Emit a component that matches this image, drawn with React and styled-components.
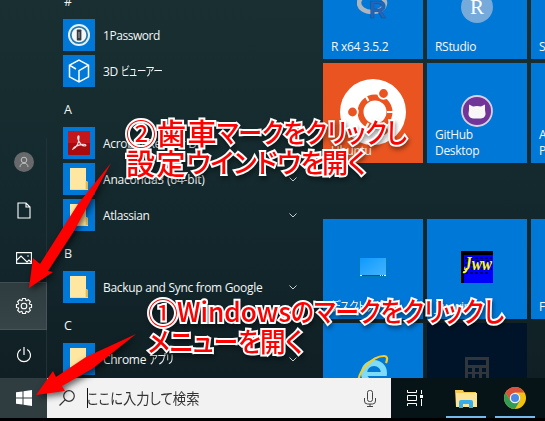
import React from "react";
import styled, { createGlobalStyle } from "styled-components";

const Global = createGlobalStyle`
  * { box-sizing: border-box; }
  body { margin: 0; overflow: hidden; background: #000; }
`;
const Screen = styled.div`
  position: relative; width: 545px; height: 421px; overflow: hidden; background: #000;
  font-family: "Open Sans", "Noto Sans CJK JP", sans-serif; color: #f4f7f7;
  display: flex; flex-direction: column;
`;
const Menu = styled.main`
  height: 378px; flex: none; display: grid; grid-template-columns: 47px 276px 222px; grid-template-rows: 378px; overflow: hidden;
  background: linear-gradient(180deg, #1a2f31 0%, #142a2e 45%, #12252a 75%, #101f23 100%);
`;
const Rail = styled.nav`
  display: flex; flex-direction: column; justify-content: flex-end;
`;
const RailButton = styled.button`
  height: 48px; flex: none; padding: 0 0 0 1px; border: 0; display: grid; place-items: center;
  color: #fff; background: ${p => p.$active ? "linear-gradient(#2f3c3f,#374448)" : "transparent"};
  box-shadow: ${p => p.$active ? "inset 0 1px #414d50, inset -1px -1px #485457" : "inset -1px 0 #213236"};
`;
const List = styled.section`margin-top: -19px; padding-left: 16px;`;
const Letter = styled.h2`margin: 0; height: 36px; padding-left: 1px; font: 400 12.5px/41px "Open Sans", sans-serif;`;
const Row = styled.div`height: 36px; display: flex; align-items: center; padding-right: 26px;`;
const IconBox = styled.span`width: 32px; height: 32px; flex: none; background: #0078d7; display: grid; place-items: center;`;
const RowName = styled.span`
  flex: 1; margin-left: 8px; padding-top: 2px; white-space: pre; font-size: 12px; line-height: 20px;
  letter-spacing: ${p => p.$ls ?? -0.3}px;
`;
const Kana = styled.span`
  display: inline-block; transform: scaleX(${p => p.$sx || 0.78}); transform-origin: left; font-feature-settings: "palt";
`;
const Tiles = styled.section`
  display: grid; grid-template-columns: repeat(3, 100px); grid-template-rows: 100px 100px 48px 100px 100px;
  column-gap: 4px; row-gap: 4px; margin-top: -41px; align-content: start;
`;
const Tile = styled.div`
  background: ${p => p.$bg || "#0078d7"}; grid-row: ${p => p.$row}; grid-column: ${p => p.$col};
  display: grid; place-items: center; position: relative; overflow: hidden; padding-bottom: ${p => p.$lift || 0}px;
`;
const TileName = styled.span`
  position: absolute; left: 8px; bottom: 4px; font-size: 12px; line-height: 16px; white-space: pre;
  letter-spacing: -0.3px;
`;
const Taskbar = styled.footer`height: 40px; flex: none; display: flex; background: #061417;`;
const Start = styled.button`width: 47px; border: 0; padding: 0; background: #303d40; display: grid; place-items: center;`;
const Search = styled.div`width: 344px; background: #f2f2f2; color: #333; display: flex; align-items: center; padding: 0 15px 0 12px;`;
const Caret = styled.i`width: 1px; height: 20px; background: #111; margin-left: 12px;`;
const Query = styled.span`
  flex: 1; margin-left: -1px; font: 400 15px/24px "Noto Sans CJK JP", sans-serif; font-feature-settings: "palt";
  transform: scaleX(0.89); transform-origin: left;
`;
const TaskButton = styled.div`
  width: ${p => p.$w}px; display: grid; place-items: center; position: relative; padding-right: ${p => p.$pr || 0}px;
  &::after { content: ""; position: absolute; bottom: 0; left: 5px; right: 4px; height: 2px; background: ${p => p.$open ? "#76b9ed" : "transparent"}; }
`;
const Overlay = styled.div`position: absolute; inset: 0; pointer-events: none;`;
const Arrows = styled.svg`position: absolute; inset: 0; filter: drop-shadow(2px 3px 3px rgba(0,0,0,.6));`;
const Callout = styled.p`
  position: absolute; left: ${p => p.$x}px; top: ${p => p.$y}px; margin: 0;
  font: 500 27px/30px "Noto Sans CJK JP", sans-serif; color: #f00; white-space: nowrap;
  -webkit-text-stroke: 4px #fff; paint-order: stroke fill; font-feature-settings: "palt";
  filter: drop-shadow(1px 3px 2px rgba(0,0,0,.4));
`;
const Line = styled.span`display: flex; height: 30px;`;
const Run = styled.span`
  width: ${p => p.$w}px; flex: none; font-size: ${p => p.$size || 27}px; font-weight: ${p => p.$wt || 500};
  letter-spacing: ${p => p.$ls || 0}px; transform: scaleX(${p => p.$sx || 1}); transform-origin: left;
`;

const S = ({ w, h = w, vb, children }) => (
  <svg width={w} height={h} viewBox={vb || `0 0 ${w} ${h}`} fill="none">{children}</svg>
);
const Chevron = () => <S w={8} h={5}><path d="M.5.5 4 4 7.5.5" stroke="#c8cecf" /></S>;
const Folder = () => (
  <S w={18} h={22}><path d="M0 0h16v13l2 1v8H0z" fill="#f5d886" /><path d="M0 0h16v13l-1 1v7H0z" fill="#ffe7a2" /><path d="M16 13v8h2v-7z" fill="#dcb85e" /></S>
);
const OnePassword = () => (
  <S w={24}><circle cx="12" cy="12" r="11" fill="#e9f0f3" /><circle cx="12" cy="12" r="8.2" fill="#f7f7f7" stroke="#247cad" strokeWidth="1.8" /><rect x="9.8" y="6.5" width="4.6" height="11" rx=".8" fill="#343b41" /><path d="M12 9v6" stroke="#aaa" /></S>
);
const Cube = () => <S w={24}><path d="M12 1.2 21.5 6.2v11.6L12 22.8 2.5 17.8V6.2zM2.5 6.2 9 10M21.5 6.2 12 11.7v11" stroke="#fff" strokeWidth="1.5" /></S>;
const Acrobat = () => (
  <S w={22} h={24}><rect width="22" height="24" rx="1" fill="#a80a0e" /><path d="M0 0h22v12H0z" fill="#c5171b" /><path d="M5 18c4-2 6-7 6-12 0-2-2-1-1 2 1 4 4 7 7 7 2-.4.6-2-2-1.700-4 .4-9 2.300-10 4.700z" stroke="#f4dcdc" strokeWidth="1.2" /></S>
);
const gear = (() => {
  const pts = [];
  for (let i = 0; i < 8; i++) {
    const a = (i * Math.PI) / 4;
    [[-.31, 6], [-.2, 7.7], [.2, 7.7], [.31, 6]].forEach(([d, r]) => pts.push(`${(9 + r * Math.sin(a + d)).toFixed(2)},${(9 - r * Math.cos(a + d)).toFixed(2)}`));
  }
  return pts.join(" ");
})();
const Gear = () => <S w={18}><polygon points={gear} stroke="#fff" strokeWidth="1.1" strokeLinejoin="round" /><circle cx="9" cy="9" r="2.800" stroke="#fff" strokeWidth="1.1" /></S>;
const Avatar = () => <S w={20}><circle cx="10" cy="10" r="10" fill="#67696a" /><circle cx="10" cy="8" r="2.800" stroke="#bfc2c2" /><path d="M6 15c0-5 8-5 8 0" stroke="#bfc2c2" /></S>;
const Doc = () => <S w={14} h={17}><path d="M1 1h8l4 4v11H1zM9 1v4h4" stroke="#fff" strokeWidth="1.1" /></S>;
const Photo = () => <S w={16} h={12}><path d="M.6.600h14.800v10.800H.6zM1 8l4-4 6 6 2-2 2 2" stroke="#fff" strokeWidth="1.1" /><circle cx="12" cy="4" r=".8" fill="#fff" /></S>;
const Power = () => <S w={16} h={17}><path d="M8 1v8M4.800 3.500a6.500 6.500 0 1 0 6.400 0" stroke="#fff" strokeWidth="1.2" /></S>;
const Windows = () => <S w={16}><path d="M0 2.300 6.500 1.400v6.100H0zM7.500 1.200 16 0v7.500H7.500zM0 8.500h6.500v6.100L0 13.700zM7.500 8.500H16V16l-8.500-1.200z" fill="#fff" /></S>;

const Ubuntu = () => (
  <S w={66}><circle cx="33" cy="33" r="33" fill="#fff" />
    <circle cx="35" cy="33" r="14.500" stroke="#e95420" strokeWidth="6" />
    <path d="M47 33h8M28.500 22 24 14M28.500 44 24 52" stroke="#fff" strokeWidth="2.200" />
    {[[12.5, 33], [43.500, 14.500], [43.500, 51.500]].map(([x, y]) => <circle key={y} cx={x} cy={y} r="5.300" fill="#e95420" stroke="#fff" strokeWidth="1.800" />)}
  </S>
);
const RLogo = () => <S w={32} h={28}><ellipse cx="15" cy="12" rx="13" ry="9" stroke="#aeb5bd" strokeWidth="4.500" /><text x="12" y="27" fontSize="24" fontWeight="700" fontFamily="Liberation Sans" fill="#2465b6" stroke="#17529b" strokeWidth=".5">R</text></S>;
const RStudio = () => <S w={32}><circle cx="16" cy="16" r="16" fill="#75aadb" /><text x="16" y="23" fontSize="21" textAnchor="middle" fontFamily="Liberation Serif" fill="#fff">R</text></S>;
const GitHub = () => <S w={32}><circle cx="16" cy="16" r="15" fill="#71359a" stroke="#d8d0e1" strokeWidth="1.800" /><path d="M8 9.500l4 2q4-1 8 0l4-2v5.500q2 8-4 8.500H12q-6-.5-4-8.500z" fill="#f7f7f8" /></S>;
const Desktop = () => <S w={28} h={20}><defs><linearGradient id="desk" x2="1" y2="1"><stop stopColor="#0e96ff" /><stop offset=".5" stopColor="#2aa8ff" /><stop offset="1" stopColor="#45b4ff" /></linearGradient></defs><rect x=".5" y=".5" width="27" height="19" fill="url(#desk)" stroke="#087bb3" /><path d="M1 18.500h26" stroke="#075288" /><path d="M1 18.500h2M21 18.500h1M23 18.500h1M25 18.500h2" stroke="#fff" /></S>;
const Jww = () => (
  <S w={32}><path d="M0 0h32v32H0z" fill="#000" /><path d="M3 4h29v28H3z" fill="#00f" /><path d="M4 7h27M5 10h26M4 14h27M5 18h26M4 22h24" stroke="#000064" strokeDasharray="3 2" strokeWidth="2" />
    <text x="3" y="19" fontSize="19" textLength="28" lengthAdjust="spacingAndGlyphs" fontFamily="Liberation Serif" fontWeight="700" fontStyle="italic" fill="#ff0">Jww</text>
    <path d="M6 17q-1 5-4 4" stroke="#ff0" strokeWidth="2" /></S>
);
const IE = () => (
  <S w={34} h={38}><circle cx="18" cy="19" r="10" stroke="#7fdcf8" strokeWidth="6" /><path d="M9 20h19" stroke="#7fdcf8" strokeWidth="4" /><path d="M19 22h12v5H19z" fill="#0078d7" /><path d="M3 30C0 19 16 2 28 2c3 0 4 2 2 7" stroke="#f8ce24" strokeWidth="2.200" /></S>
);
const Calc = () => <S w={24} h={32}><path d="M0 0h24v32H0z" fill="#32353a" /><path d="M3 3h18v5H3z" fill="#001429" /><path d="M3 13h18M3 19h18M3 25h18" stroke="#001429" strokeWidth="4" strokeDasharray="4 3" /></S>;
const Explorer = () => <S w={22} h={19}><path d="M0 1h8l1 2h12v15H1z" fill="#f4c94e" /><path d="M1 4h21v14H1z" fill="#ffe497" /><path d="M4 19v-6q0-2 2-2h10q2 0 2 2v6h-4v-4H8v4z" fill="#36aee8" /></S>;
const Chrome = () => (
  <S w={22}><circle cx="11" cy="11" r="11" fill="#f4c20d" /><path d="M1.500 5.500A11 11 0 0 1 20.500 5.500H11L6.200 13.700z" fill="#d85140" /><path d="M1.500 5.500A11 11 0 0 0 11 22l4.800-8.300H6.200z" fill="#329b54" /><circle cx="11" cy="11" r="5.200" fill="#f4f4f4" /><circle cx="11" cy="11" r="4" fill="#4a88ea" /></S>
);

const entries = [
  { h: "#" }, { n: "1Password", i: <OnePassword />, ls: -0.45 }, { n: "3D ", k: "ビューアー", i: <Cube /> },
  { h: "A" }, { n: "Acrobat Reader DC", i: <Acrobat /> }, { n: "Anaconda3 (64-bit)", i: <Folder />, c: 1, ls: -0.2 }, { n: "Atlassian", i: <Folder />, c: 1, ls: -0.4 },
  { h: "B" }, { n: "Backup and Sync from Google", i: <Folder />, c: 1 },
  { h: "C" }, { n: "Chrome ", k: "アプリ", i: <Folder />, c: 1 },
];

export default function App() {
  return (
    <Screen>
      <Global />
      <Menu>
        <Rail>
          <RailButton><Avatar /></RailButton>
          <RailButton><Doc /></RailButton>
          <RailButton><Photo /></RailButton>
          <RailButton $active><Gear /></RailButton>
          <RailButton><Power /></RailButton>
        </Rail>
        <List>
          {entries.map(e => e.h ? <Letter key={e.h}>{e.h}</Letter> : (
            <Row key={e.n}><IconBox>{e.i}</IconBox><RowName $ls={e.ls}>{e.n}{e.k && <Kana>{e.k}</Kana>}</RowName>{e.c && <Chevron />}</Row>
          ))}
        </List>
        <Tiles>
          <Tile $row={1} $col={1} $lift={8}><RLogo /><TileName>R x64 3.5.2</TileName></Tile>
          <Tile $row={1} $col={2} $lift={4}><RStudio /><TileName>RStudio</TileName></Tile>
          <Tile $row={1} $col={3}><TileName>Slack</TileName></Tile>
          <Tile $row={2} $col={1} $bg="#e95420" $lift={2}><Ubuntu /><TileName>Ubuntu</TileName></Tile>
          <Tile $row={2} $col={2} $lift={4}><GitHub /><TileName>{"GitHub\nDesktop"}</TileName></Tile>
          <Tile $row={2} $col={3}><TileName>{"Atom\nPreview"}</TileName></Tile>
          <Tile $row={4} $col={1} $lift={4}><Desktop /><TileName><Kana $sx={0.85}>デスクトップ</Kana></TileName></Tile>
          <Tile $row={4} $col={2} $lift={4}><Jww /><TileName>Jw_win</TileName></Tile>
          <Tile $row={4} $col={3}><TileName>File</TileName></Tile>
          <Tile $row={5} $col={1}><IE /></Tile>
          <Tile $row={5} $col={2} $bg="#001429"><Calc /></Tile>
        </Tiles>
      </Menu>
      <Taskbar>
        <Start><Windows /></Start>
        <Search>
          <S w={16}><circle cx="10" cy="6" r="5.300" stroke="#333" strokeWidth="1.200" /><path d="M6.300 9.700.5 15.500" stroke="#333" strokeWidth="1.200" /></S>
          <Caret /><Query>ここに入力して検索</Query>
          <S w={12} h={17}><rect x="3.500" y=".5" width="5" height="11" rx="2" stroke="#444" /><path d="M.5 8v3q0 3 3 3h5q3 0 3-3V8M6 14v2.500M3 16.500h6" stroke="#444" /></S>
        </Search>
        <TaskButton $w={50} $pr={3}><S w={17} h={16}><path d="M1.500 0v2.500h9V0M1.500 16v-2.500h9V16M1.500 5.500h9v5h-9zM15.500 0v4M15.500 9v7" stroke="#fff" /><path d="M14 5h3v3h-3z" fill="#fff" /></S></TaskButton>
        <TaskButton $w={49} $open><Explorer /></TaskButton>
        <TaskButton $w={49} $open><Chrome /></TaskButton>
      </Taskbar>
      <Overlay>
        <Arrows width="545" height="421">
          <path d="M111 163 74 231 48 271 53 272 29 288 33 258 40 264 78 204z" fill="#f00" />
          <path d="M136 334 92 369 62 386 65 391 36 395 53 371 56 377 86 357z" fill="#f00" />
        </Arrows>
        <Callout $x={126} $y={117}>
          <Line><Run $w={31} $size={30} $wt={400}>②</Run><Run $w={60} $size={29} $ls={1.5}>歯車</Run><Run $w={192} $sx={0.885}>マークをクリックし</Run></Line>
          <Line><Run $w={61} $size={29} $ls={1.5}>設定</Run><Run $w={135} $sx={0.965}>ウインドウを</Run><Run $w={50} $sx={0.97}>開く</Run></Line>
        </Callout>
        <Callout $x={148} $y={296}>
          <Line><Run $w={29} $size={30} $wt={400}>①</Run><Run $w={114} $sx={0.97}>Windows</Run><Run $w={215} $sx={0.885}>のマークをクリックし</Run></Line>
          <Line><Run $w={112} $sx={0.92}>メニューを</Run><Run $w={50} $sx={0.95}>開く</Run></Line>
        </Callout>
      </Overlay>
    </Screen>
  );
}
